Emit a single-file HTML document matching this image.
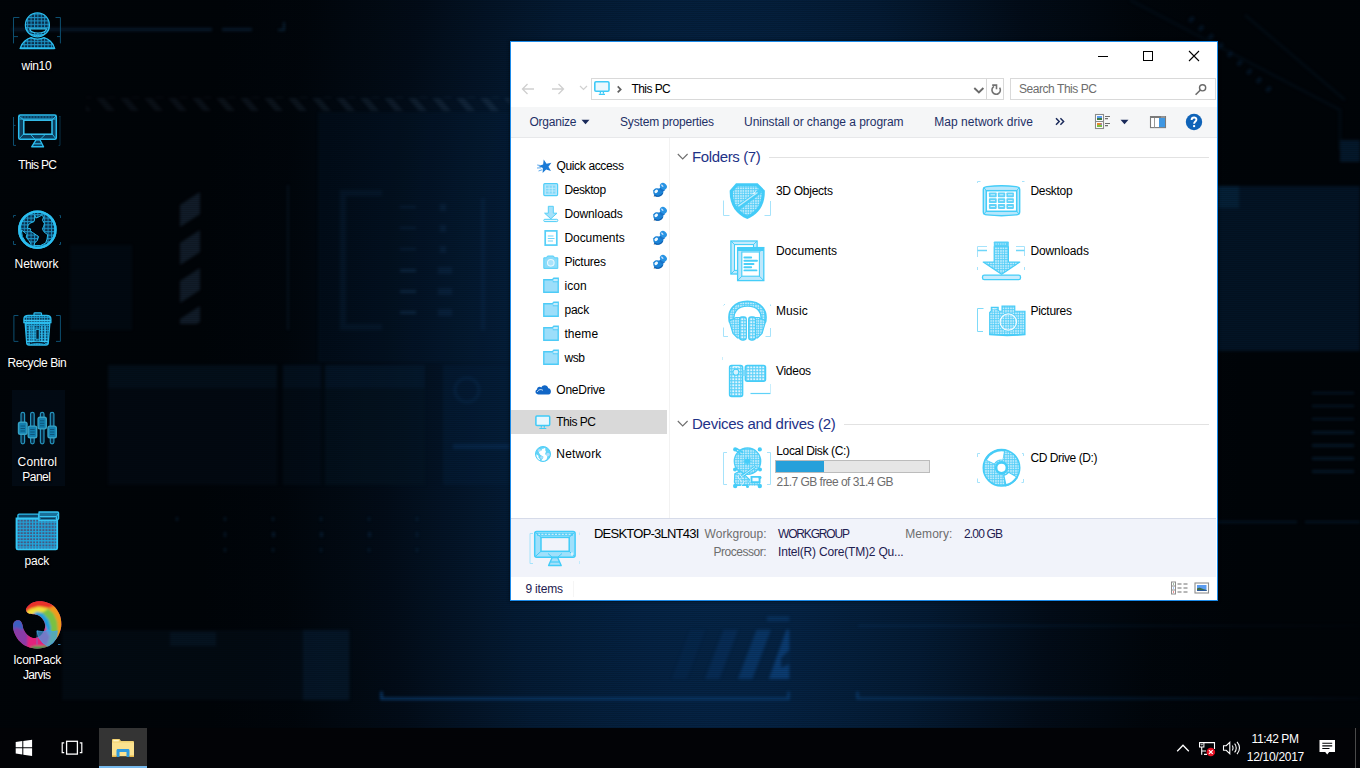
<!DOCTYPE html>
<html>
<head>
<meta charset="utf-8">
<title>This PC</title>
<style>
*{box-sizing:border-box;margin:0;padding:0}
html,body{width:1360px;height:768px;overflow:hidden;background:#000408}
body{font-family:"Liberation Sans",sans-serif;font-size:12px;color:#000;position:relative}
.abs,.t,.dl,svg{position:absolute}
.t{white-space:nowrap;line-height:14px;height:14px}
/* ---------- wallpaper ---------- */
#wall{position:absolute;left:0;top:0;width:1360px;height:768px;overflow:hidden;
 background:
  radial-gradient(ellipse 520px 1400px at 720px 420px,rgb(6,40,76) 0%,rgb(5,35,68) 20%,rgb(4,27,52) 42%,rgb(2,12,24) 65%,rgba(1,7,14,.5) 85%,rgba(1,6,12,0) 100%),
  #000408;}
#wall svg{filter:blur(1.7px)}
#scan{position:absolute;left:0;top:0;width:1360px;height:728px;background:repeating-linear-gradient(to bottom,rgba(0,0,0,0) 0,rgba(0,0,0,0) 1px,rgba(0,0,0,.14) 1px,rgba(0,0,0,.14) 2px)}
/* ---------- desktop icons ---------- */
.dl{color:#fff;text-align:center;width:90px;left:-8px;line-height:15px;font-size:12px;text-shadow:0 1px 2px rgba(0,0,0,.9),0 0 2px rgba(0,0,0,.8)}
/* ---------- window ---------- */
#win{position:absolute;left:510px;top:41px;width:708px;height:560px;background:#fff;border:1px solid #1b8ae8;box-shadow:0 0 3px rgba(0,0,0,.7)}
#win .in{position:absolute;left:-511px;top:-42px;width:1360px;height:768px}
/* ---------- taskbar ---------- */
#tb{position:absolute;left:0;top:728px;width:1360px;height:40px;background:#020306}
</style>
</head>
<body>
<div id="wall">
<svg style="left:0;top:0" width="1360" height="728" viewBox="0 0 1360 728">
<defs>
<pattern id="hz" width="24" height="14" patternUnits="userSpaceOnUse"><path d="M0 0L8 0L20 14L12 14Z" fill="#6f93b8"/></pattern>
<linearGradient id="fadeL" x1="0" x2="1"><stop offset="0" stop-color="#fff" stop-opacity=".25"/><stop offset="1" stop-color="#fff" stop-opacity="1"/></linearGradient>
<mask id="mL"><rect x="0" y="0" width="1360" height="728" fill="url(#fadeL)"/></mask>
<linearGradient id="gR" x1="0" x2="1"><stop offset="0" stop-color="#0b3a6c" stop-opacity="0"/><stop offset="1" stop-color="#0b3a6c" stop-opacity=".9"/></linearGradient>
<linearGradient id="gLine" x1="0" x2="1"><stop offset="0" stop-color="#0c3d6e" stop-opacity=".9"/><stop offset="1" stop-color="#0c3d6e" stop-opacity=".1"/></linearGradient>
</defs>
<!-- dark strip on far left -->

<!-- top faint bar -->
<rect x="12" y="28" width="200" height="3" fill="#0a2238" opacity=".8"/>
<rect x="222" y="28" width="30" height="3" fill="#0a2238" opacity=".8"/><path d="M284 22V30H278" stroke="#0d2a44" stroke-width="2" fill="none" opacity=".8"/>
<!-- lighter band under hatch -->

<rect x="318" y="112" width="192" height="250" fill="#0a2c54" opacity=".13"/>
<!-- hatch stripe -->
<g mask="url(#mL)" opacity=".27"><rect x="86" y="97" width="424" height="14" fill="url(#hz)"/></g>
<!-- left tech panel -->
<g opacity=".3">
<path d="M180 205L200 192V214L180 227ZM180 243L200 230V252L180 265ZM180 281L200 268V290L180 303ZM180 319L200 306V322L196 324H180Z" fill="#3a5878"/>
<rect x="287" y="185" width="2" height="145" fill="#17324e"/>
<path d="M340 190H382V196H346V324H382V330H340Z" fill="#0d2a48"/>
<rect x="400" y="206" width="16" height="2" fill="#1b4068"/><rect x="400" y="227" width="16" height="2" fill="#1b4068"/><rect x="400" y="248" width="16" height="2" fill="#1b4068"/><rect x="400" y="269" width="16" height="3" fill="#24527f"/><rect x="400" y="290" width="16" height="3" fill="#24527f"/><rect x="400" y="311" width="16" height="3" fill="#24527f"/>
<rect x="440" y="204" width="6" height="7" fill="#173a60"/><rect x="440" y="225" width="6" height="7" fill="#173a60"/><rect x="440" y="246" width="6" height="7" fill="#173a60"/><rect x="438" y="267" width="14" height="7" fill="#173a60"/><rect x="438" y="288" width="14" height="7" fill="#173a60"/><rect x="438" y="309" width="14" height="7" fill="#173a60"/>
<rect x="481" y="198" width="4" height="132" fill="#0f3258"/>
<rect x="70" y="245" width="62" height="85" fill="#06182a"/>
</g>
<!-- middle panels -->
<g opacity=".5">
<rect x="108" y="365" width="169" height="120" fill="#04111e" opacity=".9"/>
<rect x="108" y="365" width="169" height="23" fill="#071c30" opacity=".9"/>
<rect x="283" y="365" width="38" height="120" fill="#04121f" opacity=".9"/>
<rect x="283" y="365" width="38" height="23" fill="#071d32" opacity=".9"/>
<rect x="325" y="365" width="100" height="120" fill="#051829" opacity=".9"/>
<rect x="325" y="365" width="100" height="23" fill="#08223b" opacity=".9"/>
<rect x="443" y="365" width="67" height="120" fill="#062240" opacity=".8"/>
<circle cx="467" cy="390" r="12" fill="none" stroke="#0b3560" stroke-width="3" opacity=".8"/>
<rect x="453" y="444" width="57" height="5" fill="#0d3c6c" opacity=".8"/>
</g>
<!-- dots grid -->
<g fill="#0c2b48" opacity=".6">
<rect x="176" y="517" width="2" height="4"/><rect x="224" y="517" width="2" height="4"/><rect x="272" y="517" width="2" height="4"/><rect x="320" y="517" width="2" height="4"/><rect x="368" y="517" width="2" height="4"/><rect x="416" y="517" width="2" height="4"/>
<rect x="224" y="532" width="2" height="5"/><rect x="272" y="532" width="3" height="5"/><rect x="320" y="532" width="3" height="5"/><rect x="368" y="532" width="3" height="5"/><rect x="416" y="532" width="2" height="5"/>
<rect x="224" y="548" width="2" height="4"/><rect x="272" y="548" width="2" height="4"/><rect x="320" y="548" width="2" height="4"/><rect x="368" y="548" width="2" height="4"/><rect x="416" y="548" width="2" height="4"/>
</g>
<!-- bottom-left blocks -->
<rect x="62" y="630" width="288" height="70" fill="#04121f" opacity=".45"/>
<rect x="170" y="632" width="46" height="14" fill="#0a2238" opacity=".4"/>
<rect x="303" y="630" width="46" height="70" fill="#071f38" opacity=".5"/>
<!-- bracket line -->
<path d="M381.500 691.500V698.700H788.500V691.500" fill="none" stroke="#0c3f74" stroke-width="2.600" opacity=".9"/>
<path d="M857.500 691.500V699.500" stroke="#0c3f74" stroke-width="2.600" opacity=".8"/>
<rect x="858" y="697.500" width="502" height="2" fill="url(#gLine)"/>
<rect x="858" y="625" width="502" height="1.500" fill="url(#gLine)" opacity=".5"/>
<!-- diagonal stripes -->
<g>
<path d="M768.800 679L786.300 629.700H789.400V679Z" fill="#0c3f78" opacity=".9"/>
<path d="M737.900 679L756.500 629.700H771L752.400 679Z" fill="#0b3c72" opacity=".75"/>
<path d="M705 679L723.500 629.700H738L719.400 679Z" fill="#0a386a" opacity=".45"/>
<path d="M672 679L690.500 629.700H705L686.500 679Z" fill="#0a3464" opacity=".22"/>
<path d="M781 658L789.400 650V664L781 668Z" fill="#04203f" opacity=".8"/>
<rect x="766.800" y="616.300" width="22.600" height="5" fill="#0b3c70" opacity=".6"/>
</g>
<!-- right rect -->
<rect x="1217" y="186" width="143" height="165" fill="#031527" opacity=".95"/>
<rect x="1217" y="186" width="22" height="22" fill="#06213a" opacity=".9"/>
<rect x="1340" y="140" width="20" height="22" fill="#06213a" opacity=".7"/>
<!-- right side diagonals -->
<g stroke="#05182a" stroke-width="3" opacity=".35" fill="none">
<path d="M1130 0L1340 110V150"/><path d="M1245 15L1345 100"/>
</g>
<g stroke="#06203a" stroke-width="6" opacity=".6" stroke-dasharray="4 9"><path d="M1190 18L1275 95"/></g>
<!-- lower right features -->
<g fill="#0a2a48" opacity=".55">
<rect x="1312" y="392" width="42" height="2"/><rect x="1312" y="405" width="42" height="2"/><rect x="1312" y="418" width="42" height="2"/><rect x="1312" y="431" width="42" height="3"/><rect x="1312" y="444" width="42" height="3"/><rect x="1312" y="457" width="42" height="3"/><rect x="1312" y="470" width="42" height="3"/>
<rect x="1217" y="521" width="80" height="2"/><rect x="1305" y="521" width="55" height="2"/>
</g>
</svg>

</div>
<div id="scan"></div>
<svg style="left:0;top:0" width="90" height="700" viewBox="0 0 90 700">
<defs>
<pattern id="mesh" width="3.4" height="3.4" patternUnits="userSpaceOnUse"><rect width="3.4" height="3.4" fill="#0a2c48"/><path d="M0 .5H3.4M.5 0V3.4" stroke="#1c93c6" stroke-width=".95"/></pattern>
<pattern id="meshF" width="3.100" height="3.100" patternUnits="userSpaceOnUse" x="16.500" y="518.500"><rect width="3.100" height="3.100" fill="#46587f"/><path d="M0 .5H3.100M.5 0V3.100" stroke="#20a6dc" stroke-width="1.150"/></pattern>
<pattern id="meshT" width="2.600" height="2.600" patternUnits="userSpaceOnUse"><rect width="2.600" height="2.600" fill="#0c3a58"/><path d="M0 .5H2.600M.5 0V2.600" stroke="#1fa0d4" stroke-width=".9"/></pattern>
</defs>
<g fill="none" stroke="#0d4f70" stroke-width="1">
<path d="M19.400 17.500H13.500V43.400M14 36.600H18M55.500 17.500H60.400V43.400M57 36.600H60"/>
<path d="M13.500 117V145.400H16M13.500 125.400H15.500" /><path d="M60 116.500V145.400M58.500 145.400H60M59 116.500H60.500" opacity=".6"/>
<path d="M13.500 217.500V215.500H15.800M13.500 241V244.500H16M59.500 215.500H60.500V218M59 244.500H60.500V242" />
<path d="M18.400 315.500H13.900V341.400H18.400M56 315.500H60.400V341.400H56"/>
</g>
<!-- user -->
<g stroke="#2bbdee" stroke-width="1.300" fill="url(#mesh)">
<path d="M20.200 48.400C21.500 42.500 27 38.700 31 37.600 34.500 39.700 40.500 39.700 44 37.600 48 38.700 53.500 42.500 54.600 48.400Z"/>
<circle cx="37.400" cy="24.900" r="12"/>
</g>
<path d="M20.200 48.300H54.600" stroke="#2bbdee" stroke-width="1.700"/>
<path d="M29.600 28.800H46.600C45 34.400 31.200 34.400 29.600 28.800Z" fill="#01050a" stroke="#36c4f2" stroke-width="1.200" stroke-linejoin="round"/>
<path d="M26 28.500C28 38 47 38 49 28.500" fill="none" stroke="#2bbdee" stroke-width="1"/>
<!-- This PC monitor -->
<rect x="18.700" y="115.100" width="37.600" height="24.200" rx="1.600" fill="#0c3e5e" stroke="#2bbdee" stroke-width="1.500"/>
<path d="M19.500 119H55.500" stroke="#2bbdee" stroke-width="1"/>
<path d="M22 115.500V119M25 115.500V119M28 115.500V119M31 115.500V119M34 115.500V119M37 115.500V119M40 115.500V119M43 115.500V119M46 115.500V119M49 115.500V119M52 115.500V119" stroke="#1a86b6" stroke-width=".8"/>
<path d="M19 116L23.600 120M56 116L52.200 120M19 139L23.600 134M56 139L52.200 134M30.800 134.600L35.300 139.600M45.100 134.600L39.900 139.600" stroke="#2bbdee" stroke-width=".9"/>
<rect x="23.800" y="120.200" width="28.200" height="14" fill="#01050a" stroke="#36c4f2" stroke-width="1.500"/>
<path d="M36 139.800H39.900L43.500 146.800H31.700Z" fill="#0c3e5e" stroke="#2bbdee" stroke-width="1.400" stroke-linejoin="round"/>
<path d="M34 143.800H41.500" stroke="#2bbdee" stroke-width="1.100"/>
<!-- globe -->
<circle cx="37.400" cy="229.700" r="18.100" fill="url(#mesh)" stroke="#2bbdee" stroke-width="2.300"/>
<path d="M34.7 215.1L36.0 218.0L39.2 216.7L41.8 215.1L43.5 217.0L42.5 220.3L44.4 223.5L43.8 226.1L42.5 228.7L43.5 231.3L45.7 233.3L47.7 234.6L47.0 239.1L45.7 243.0L40.5 245.6L34.0 245.6L34.7 243.0L37.3 240.4L38.6 236.5L36.6 235.2L32.7 232.6L30.1 230.7L30.8 229.0L27.5 228.1L28.2 224.8L30.8 222.9L34.0 221.6L34.7 219.0Z" fill="#01050a" stroke="#2bbdee" stroke-width="1" stroke-linejoin="round"/>
<path d="M21.3 230.0L24.9 232.6L26.9 234.6L26.2 237.2L28.8 240.4L30.8 243.7L29.5 244.7L25.6 241.7L22.3 236.5Z" fill="#01050a" stroke="#2bbdee" stroke-width="1" stroke-linejoin="round"/>
<circle cx="37.400" cy="229.700" r="18.100" fill="none" stroke="#2bbdee" stroke-width="2.300"/>
<!-- recycle bin -->
<path d="M34 315.700V313.600C34 313 34.500 312.800 35 312.800H40.500C41 312.800 41.500 313 41.500 313.600V315.700" fill="#0c3a58" stroke="#2bbdee" stroke-width="1.200"/>
<path d="M23.900 322.700V319C23.900 316.500 26 315.500 28.500 315.500H46.500C49 315.500 50.900 316.500 50.900 319V322.700Z" fill="url(#meshT)" stroke="#2bbdee" stroke-width="1.300"/>
<path d="M24 320.600H50.800" stroke="#36c4f2" stroke-width="1.500"/>
<path d="M25.200 323.500H49.800L48.300 343C48.200 344.500 47.500 345 46 345H29C27.500 345 26.800 344.500 26.700 343Z" fill="url(#meshT)" stroke="#2bbdee" stroke-width="1.300"/>
<path d="M29.800 326V341.500M33.200 326V341.500M41.800 326V341.500M45.200 326V341.500M27 341.500H48" stroke="#36c4f2" stroke-width="1.100"/>
<rect x="35.900" y="329.400" width="3.300" height="9.800" fill="#052033" stroke="#2bbdee" stroke-width=".8"/>
<path d="M30 343.500C34 342.300 41 342.300 45 343.500" stroke="#052033" stroke-width="1.200" fill="none"/>
<!-- control panel sliders -->
<g stroke="#30c2f2" stroke-width="1.200" fill="#0a3450">
<rect x="21" y="412.300" width="3.600" height="31.600" rx="1.800"/><rect x="30.600" y="412.300" width="3.600" height="31.600" rx="1.800"/><rect x="40.400" y="412.300" width="3.600" height="31.600" rx="1.800"/><rect x="50.300" y="412.300" width="3.600" height="31.600" rx="1.800"/>
</g>
<g stroke="#48d4fb" stroke-width="1.400" fill="#1aa6de">
<rect x="18.500" y="422.200" width="8.500" height="12" rx="1.800"/><rect x="28.200" y="426.100" width="8.500" height="11.600" rx="1.800"/><rect x="38.100" y="417.300" width="8.200" height="11.600" rx="1.800"/><rect x="48" y="426.100" width="8.300" height="11.600" rx="1.800"/>
</g>
<path d="M20.500 426H25M20.500 428.500H25M20.500 431H25M30.200 429.500H34.700M30.200 432H34.700M30.200 434.500H34.700M40 420.800H44.300M40 423.300H44.300M40 425.800H44.300M50 429.500H54.300M50 432H54.300M50 434.500H54.300" stroke="#0b5e88" stroke-width=".9" opacity=".9"/>
<!-- folder pack -->
<path d="M17.900 518V515.300C17.900 514.500 18.400 514.100 19.200 514.100H38.600V518" fill="#0d4a6e" stroke="#2bbdee" stroke-width="1.300"/>
<path d="M16.500 518.500H57.200V548C57.200 549 56.700 549.300 55.800 549.300H17.900C17 549.300 16.500 549 16.500 548Z" fill="url(#meshF)" stroke="#35c8f5" stroke-width="1.800"/>
<path d="M39 512H57.500C58.200 512 58.600 512.400 58.600 513V518.500L57 520.500H39Z" fill="#1a6f98" stroke="#36c4f2" stroke-width="1.300" stroke-linejoin="round"/>
<path d="M39.500 516.500H56.500L58.300 513.500M56.500 516.500V520" stroke="#36c4f2" stroke-width="1" fill="none"/>
<path d="M41 518.500H55" stroke="#0b3a58" stroke-width="1"/>
<!-- IconPack swirl -->
<defs><clipPath id="swc"><path d="M26.51 607.91C27.59 606.43 30.21 603.69 32.96 602.61C35.71 601.54 39.65 600.99 42.99 601.46C46.34 601.94 50.28 603.33 53.02 605.48C55.77 607.63 58.09 611.21 59.47 614.36C60.86 617.52 61.34 621.29 61.34 624.39C61.34 627.50 60.50 630.36 59.47 632.99C58.45 635.62 57.20 637.89 55.17 640.16C53.14 642.43 50.28 645.17 47.29 646.61C44.31 648.04 40.60 648.76 37.26 648.76C33.92 648.76 30.33 648.04 27.23 646.61C24.12 645.17 20.85 642.67 18.63 640.16C16.41 637.65 14.81 634.19 13.90 631.56C12.99 628.93 12.87 626.19 13.18 624.39C13.49 622.60 14.62 621.41 15.76 620.81C16.91 620.21 18.96 620.21 20.06 620.81C21.16 621.41 21.76 622.96 22.36 624.39C22.95 625.83 22.83 627.69 23.65 629.41C24.46 631.13 25.68 633.28 27.23 634.71C28.78 636.15 30.93 637.70 32.96 638.01C34.99 638.32 37.62 637.65 39.41 636.57C41.20 635.50 42.75 633.35 43.71 631.56C44.66 629.77 45.14 627.62 45.14 625.83C45.14 624.04 44.54 622.36 43.71 620.81C42.87 619.26 41.68 617.59 40.13 616.51C38.57 615.44 36.19 614.84 34.39 614.36C32.60 613.88 30.69 614.12 29.38 613.65C28.06 613.17 26.99 612.45 26.51 611.50C26.03 610.54 25.44 609.39 26.51 607.91Z"/></clipPath><filter id="swb" x="-20%" y="-20%" width="140%" height="140%"><feGaussianBlur stdDeviation="1.1"/></filter></defs>
<g clip-path="url(#swc)"><rect x="8" y="596" width="60" height="58" fill="#d8247a"/><g filter="url(#swb)">
<path d="M45.9 624.4L46.6 628.7L49.4 634.4L48.7 647.3L37.3 650.2L26.5 647.3L27.2 634.7L33.0 638.0L39.4 636.6L43.7 631.6Z" fill="#e2207c" stroke="#e2207c" stroke-width="1.2" stroke-linejoin="round"/>
<path d="M14.3 626.5L23.6 629.4L27.2 634.7L26.5 647.3L17.2 640.9L12.9 633.0Z" fill="#8a3aa6" stroke="#8a3aa6" stroke-width="1.2" stroke-linejoin="round"/>
<path d="M12.9 632.3L12.2 624.4L15.0 619.4L20.8 619.4L22.9 623.7L23.6 629.4L14.3 626.5Z" fill="#3d5fc2" stroke="#3d5fc2" stroke-width="1.2" stroke-linejoin="round"/>
<path d="M30.8 647.6L37.3 650.2L48.0 647.6L49.4 645.6L43.0 646.5L35.8 646.7Z" fill="#2a9a48" stroke="#2a9a48" stroke-width="1.2" stroke-linejoin="round"/>
<path d="M43.0 600.0L54.5 604.3L61.6 614.4L63.1 624.4L60.9 634.4L55.9 640.9L57.3 630.1L56.6 621.5L53.0 613.6L47.3 608.6L38.7 606.9Z" fill="#f39a1e" stroke="#f39a1e" stroke-width="1.2" stroke-linejoin="round"/>
<path d="M24.4 607.9L33.0 600.7L43.0 600.0L54.5 605.0L47.3 607.9L38.7 607.2L30.8 609.3L25.8 612.9Z" fill="#e8302a" stroke="#e8302a" stroke-width="1.2" stroke-linejoin="round"/>
<path d="M47.3 608.6L53.0 613.6L56.6 621.5L57.3 630.1L55.9 640.9L47.3 647.3L50.9 637.3L50.2 627.3L48.0 620.1L43.0 614.4L37.3 612.2L43.0 611.5Z" fill="#7ac143" stroke="#7ac143" stroke-width="1.2" stroke-linejoin="round"/>
<path d="M25.8 612.9L30.8 609.3L38.7 607.2L47.3 608.6L43.0 611.5L37.3 612.2L31.5 614.4L27.2 615.1Z" fill="#efe03a" stroke="#efe03a" stroke-width="1.2" stroke-linejoin="round"/>
<path d="M37.3 612.2L43.0 614.4L48.0 620.1L50.2 627.3L49.4 634.4L46.6 628.7L45.1 623.7L42.3 618.7L38.7 615.8L33.7 614.6Z" fill="#1f9fe0" stroke="#1f9fe0" stroke-width="1.2" stroke-linejoin="round"/>
</g></g>
<path d="M37.0 630.8L43.0 631.8L48.0 630.1L53.0 631.8L57.3 630.8L56.6 637.3L53.0 643.0L48.0 646.2L43.0 643.0L38.4 637.3Z" fill="rgba(70,160,230,.7)" stroke="#3fa8ea" stroke-width=".7"/>
<path d="M37.0 630.8L37.0 644.5" stroke="#3fa8ea" stroke-width=".7" opacity=".7"/>
<path d="M58.0 644.5H60.5" stroke="#3fa8ea" stroke-width=".7"/>
</svg>
<div class="abs" style="left:12px;top:390px;width:53px;height:96px;background:rgba(8,30,52,.28)"></div>
<span class="t" style="left:21.6px;top:59px;font-size:12px;line-height:15px;height:15px;color:#fff;letter-spacing:-0.340px;text-shadow:0 1px 2px #000,0 0 2px #000">win10</span>
<span class="t" style="left:18.3px;top:158px;font-size:12px;line-height:15px;height:15px;color:#fff;letter-spacing:-0.665px;text-shadow:0 1px 2px #000,0 0 2px #000">This PC</span>
<span class="t" style="left:14.5px;top:257px;font-size:12px;line-height:15px;height:15px;color:#fff;text-shadow:0 1px 2px #000,0 0 2px #000">Network</span>
<span class="t" style="left:7.5px;top:356px;font-size:12px;line-height:15px;height:15px;color:#fff;letter-spacing:-0.406px;text-shadow:0 1px 2px #000,0 0 2px #000">Recycle Bin</span>
<span class="t" style="left:17.6px;top:455px;font-size:12px;line-height:15px;height:15px;color:#fff;letter-spacing:0.119px;text-shadow:0 1px 2px #000,0 0 2px #000">Control</span>
<span class="t" style="left:22.3px;top:470px;font-size:12px;line-height:15px;height:15px;color:#fff;letter-spacing:-0.526px;text-shadow:0 1px 2px #000,0 0 2px #000">Panel</span>
<span class="t" style="left:24.6px;top:554px;font-size:12px;line-height:15px;height:15px;color:#fff;letter-spacing:-0.253px;text-shadow:0 1px 2px #000,0 0 2px #000">pack</span>
<span class="t" style="left:13.2px;top:653px;font-size:12px;line-height:15px;height:15px;color:#fff;letter-spacing:-0.194px;text-shadow:0 1px 2px #000,0 0 2px #000">IconPack</span>
<span class="t" style="left:22.9px;top:668px;font-size:12px;line-height:15px;height:15px;color:#fff;letter-spacing:-0.649px;text-shadow:0 1px 2px #000,0 0 2px #000">Jarvis</span>

<div id="win"><div class="in">
<!-- title bar buttons -->
<div class="abs" style="left:1098px;top:56px;width:10px;height:1px;background:#000"></div>
<div class="abs" style="left:1143px;top:51px;width:10px;height:10px;border:1px solid #000"></div>
<svg style="left:1188px;top:50px" width="12" height="12" viewBox="0 0 12 12"><path d="M1 1 L11 11 M11 1 L1 11" stroke="#000" stroke-width="1.1" fill="none"/></svg>
<!-- nav arrows -->
<svg style="left:521px;top:82px" width="14" height="14" viewBox="0 0 14 14"><path d="M13 7 H2 M6.5 2 L1.5 7 L6.5 12" stroke="#cfcfcf" stroke-width="1.3" fill="none"/></svg>
<svg style="left:551px;top:82px" width="14" height="14" viewBox="0 0 14 14"><path d="M1 7 H12 M7.5 2 L12.5 7 L7.5 12" stroke="#cfcfcf" stroke-width="1.3" fill="none"/></svg>
<svg style="left:579px;top:85px" width="9" height="6" viewBox="0 0 9 6"><path d="M1 1 L4.5 4.5 L8 1" stroke="#d0d0d0" stroke-width="1.2" fill="none"/></svg>
<!-- address box -->
<div class="abs" style="left:591px;top:78px;width:413px;height:22px;border:1px solid #d9d9d9;background:#fff"></div>
<div class="abs" style="left:986px;top:78px;width:1px;height:22px;background:#d9d9d9"></div>
<svg style="left:616px;top:85px" width="7" height="9" viewBox="0 0 7 9"><path d="M1.700 1.400L4.700 4.400L1.700 7.400" stroke="#5f5f5f" stroke-width="1.700" fill="none"/></svg>
<span class="t" style="left:631.4px;top:82px;font-size:12px;line-height:15px;height:15px;color:#000;letter-spacing:-0.548px;">This PC</span>
<svg style="left:973px;top:86px" width="12" height="8" viewBox="0 0 12 8"><path d="M1.300 2L5.900 6.500L10.400 2" stroke="#6a6a6a" stroke-width="1.850" fill="none"/></svg>
<svg style="left:989px;top:83px" width="14" height="14" viewBox="0 0 14 14"><path d="M10.600 4.600A4.200 4.200 0 1 1 5 3.400" stroke="#737373" stroke-width="1.600" fill="none"/><path d="M3.200 2.150H7.500V6.300" stroke="#737373" stroke-width="1.600" fill="none"/></svg>
<svg style="left:593px;top:80px" width="18" height="16" viewBox="0 0 18 16"><rect x="1.800" y="1.700" width="14.200" height="9.600" rx="1.200" fill="#eaf8fe" stroke="#3fcaf7" stroke-width="1.600"/><path d="M7.400 11.500V13.600M10.400 11.500V13.600M5.800 14.400H12" stroke="#3fcaf7" stroke-width="1.300"/></svg>
<!-- search box -->
<div class="abs" style="left:1010px;top:78px;width:206px;height:22px;border:1px solid #d9d9d9;background:#fff"></div>
<span class="t" style="left:1019px;top:82px;font-size:12px;line-height:15px;height:15px;color:#6d6d6d;letter-spacing:-0.447px;">Search This PC</span>
<svg style="left:1194px;top:83px" width="14" height="14" viewBox="0 0 14 14"><circle cx="8.6" cy="4.8" r="3.1" stroke="#6a6a6a" stroke-width="1.4" fill="none"/><path d="M6.4 7 L1.6 11.8" stroke="#6a6a6a" stroke-width="1.6" fill="none"/></svg>
<!-- command bar -->
<div class="abs" style="left:511px;top:107px;width:706px;height:30px;background:#f5f6f7"></div>
<div class="abs" style="left:511px;top:137px;width:706px;height:1px;background:#e7e8ea"></div>
<span class="t" style="left:529.5px;top:115px;font-size:12px;line-height:15px;height:15px;color:#1e3066;letter-spacing:-0.243px;">Organize</span>
<svg style="left:581px;top:119px" width="9" height="6" viewBox="0 0 9 6"><path d="M0.5 0.8 H8.5 L4.5 5.2 Z" fill="#1a2a5a"/></svg>
<span class="t" style="left:620px;top:115px;font-size:12px;line-height:15px;height:15px;color:#1e3066;letter-spacing:-0.169px;">System properties</span>
<span class="t" style="left:744.1px;top:115px;font-size:12px;line-height:15px;height:15px;color:#1e3066;letter-spacing:-0.045px;">Uninstall or change a program</span>
<span class="t" style="left:934.2px;top:115px;font-size:12px;line-height:15px;height:15px;color:#1e3066;letter-spacing:0.047px;">Map network drive</span>
<svg style="left:1055px;top:117px" width="10" height="9" viewBox="0 0 10 9"><path d="M1 1.2 L4.2 4.5 L1 7.8 M5.4 1.2 L8.6 4.5 L5.4 7.8" stroke="#1a2a5a" stroke-width="1.5" fill="none"/></svg>
<svg style="left:1094px;top:113px" width="18" height="17" viewBox="0 0 18 17"><rect x="1.500" y="1.500" width="8" height="14" fill="#fff" stroke="#8a8a8a" stroke-width="1.100"/><path d="M1.500 8.500H9.500" stroke="#8a8a8a" stroke-width="1.100"/><rect x="3" y="3" width="5" height="2" fill="#5b9cf0"/><rect x="3" y="5" width="5" height="2" fill="#3c7a4a"/><rect x="3" y="10" width="5" height="2" fill="#e8862a"/><rect x="3" y="12" width="5" height="2" fill="#7bc043"/><rect x="6.500" y="10.500" width="1.500" height="1.500" fill="#8d86d8"/><path d="M11 3.500H16M11 5.600H14M11 10.500H16M11 12.600H14" stroke="#6e6e6e" stroke-width="1.100"/></svg>
<svg style="left:1120px;top:119px" width="9" height="6" viewBox="0 0 9 6"><path d="M0.5 0.8 H8.5 L4.5 5.2 Z" fill="#1a2a5a"/></svg>
<svg style="left:1149px;top:115px" width="18" height="14" viewBox="0 0 18 14"><rect x="1.500" y="1.600" width="15" height="11" fill="#fff" stroke="#7a7a7a" stroke-width="1.100"/><rect x="1" y="1" width="16" height="2" fill="#7a7a7a"/><rect x="10" y="3" width="6" height="9.100" fill="#3f97e2"/><path d="M5.500 3V12.500" stroke="#9a9a9a" stroke-width="1"/><rect x="12.500" y="1.500" width="1" height="1" fill="#ddd"/><rect x="14.500" y="1.500" width="1" height="1" fill="#ddd"/></svg>
<svg style="left:1185px;top:113px" width="18" height="18" viewBox="0 0 18 18"><circle cx="9" cy="9" r="8.2" fill="#0f63b8"/><path d="M6.6 7 C6.6 3.6 11.6 3.8 11.4 6.8 C11.3 8.6 9.1 8.6 9.1 10.8" stroke="#fff" stroke-width="1.9" fill="none"/><rect x="8.1" y="12.1" width="2" height="2" fill="#fff"/></svg>
<!-- nav pane -->
<div class="abs" style="left:669px;top:138px;width:1px;height:380px;background:#f2f2f2"></div>
<div class="abs" style="left:511px;top:410px;width:156px;height:24px;background:#d9d9d9"></div>
<span class="t" style="left:556.5px;top:159px;font-size:12px;line-height:15px;height:15px;color:#000;letter-spacing:-0.351px;">Quick access</span>
<span class="t" style="left:564.4px;top:183px;font-size:12px;line-height:15px;height:15px;color:#000;letter-spacing:-0.389px;">Desktop</span>
<span class="t" style="left:564.4px;top:207px;font-size:12px;line-height:15px;height:15px;color:#000;letter-spacing:-0.122px;">Downloads</span>
<span class="t" style="left:564.4px;top:231px;font-size:12px;line-height:15px;height:15px;color:#000;letter-spacing:-0.050px;">Documents</span>
<span class="t" style="left:564.4px;top:255px;font-size:12px;line-height:15px;height:15px;color:#000;letter-spacing:-0.251px;">Pictures</span>
<span class="t" style="left:564.4px;top:279px;font-size:12px;line-height:15px;height:15px;color:#000;letter-spacing:0.095px;">icon</span>
<span class="t" style="left:564.4px;top:303px;font-size:12px;line-height:15px;height:15px;color:#000;letter-spacing:-0.186px;">pack</span>
<span class="t" style="left:564.4px;top:327px;font-size:12px;line-height:15px;height:15px;color:#000;letter-spacing:0.085px;">theme</span>
<span class="t" style="left:564.4px;top:351px;font-size:12px;line-height:15px;height:15px;color:#000;letter-spacing:-0.372px;">wsb</span>
<span class="t" style="left:556.3px;top:383px;font-size:12px;line-height:15px;height:15px;color:#000;letter-spacing:-0.241px;">OneDrive</span>
<span class="t" style="left:556.3px;top:415px;font-size:12px;line-height:15px;height:15px;color:#000;letter-spacing:-0.515px;">This PC</span>
<span class="t" style="left:556.3px;top:447px;font-size:12px;line-height:15px;height:15px;color:#000;letter-spacing:0.164px;">Network</span>
<!--NI_BEGIN--><svg style="left:0;top:0" width="700" height="520" viewBox="0 0 700 520">
<!-- quick access star -->
<path d="M545.300 159.400L547.100 164.100L552 164.300L548.200 167.400L549.600 172.200L545.300 169.500L541 172.200L542.400 167.400L538.600 164.300L543.500 164.100Z" fill="#1a7ad6" transform="rotate(-14 545.300 166)"/>
<path d="M537.200 165L540.300 165.500M537 168L541 167.800M538.500 171L542 169.800" stroke="#5aa8ec" stroke-width="1"/>
<!-- desktop -->
<rect x="543.800" y="183.600" width="13.800" height="12" rx="1" fill="#b5e6fb" stroke="#4fcef8" stroke-width="1.200"/>
<rect x="546" y="185.600" width="9.400" height="8" fill="#7fd8f9"/>
<path d="M546 188.300H555.400M546 191H555.400M549.100 185.600V193.600M552.300 185.600V193.600" stroke="#c9edfc" stroke-width=".8"/>
<!-- downloads -->
<path d="M548.300 206.300H553.300V213.200H557L550.800 218.800 544.600 213.200H548.300Z" fill="#a5e1fa" stroke="#55cff8" stroke-width="1"/>
<rect x="543.800" y="219.300" width="14" height="2.300" rx="1" fill="#e6f7fe" stroke="#4fcef8" stroke-width="1"/>
<!-- documents -->
<rect x="545.200" y="230.900" width="11.600" height="14.200" fill="#fff" stroke="#55cff8" stroke-width="1.700"/>
<path d="M547.800 236H553.500M547.800 238.500H554.500M547.800 241H553" stroke="#6fd5f9" stroke-width="1.100"/>
<!-- pictures -->
<path d="M543.800 257.800H546.500L547.500 256H553.500L554.500 257.800H557.800V268.400H543.800Z" fill="#8adbf9" stroke="#55cff8" stroke-width="1"/>
<circle cx="550.800" cy="262.800" r="3.300" fill="#a9e3fb" stroke="#e8f7fe" stroke-width="1.100"/>
<g transform="translate(0,0)"><path d="M543.800 279.800H552.500L553.800 278.300H558.200V292.200H543.800Z" fill="#9cdefa" stroke="#4dcbf7" stroke-width="1.400"/><path d="M552.800 281.700H558" stroke="#4dcbf7" stroke-width="1.100"/><rect x="553.600" y="279" width="4" height="2.200" fill="#c4ecfc"/></g>
<g transform="translate(0,24)"><path d="M543.800 279.800H552.500L553.800 278.300H558.200V292.200H543.800Z" fill="#9cdefa" stroke="#4dcbf7" stroke-width="1.400"/><path d="M552.800 281.700H558" stroke="#4dcbf7" stroke-width="1.100"/><rect x="553.600" y="279" width="4" height="2.200" fill="#c4ecfc"/></g>
<g transform="translate(0,48)"><path d="M543.800 279.800H552.500L553.800 278.300H558.200V292.200H543.800Z" fill="#9cdefa" stroke="#4dcbf7" stroke-width="1.400"/><path d="M552.800 281.700H558" stroke="#4dcbf7" stroke-width="1.100"/><rect x="553.600" y="279" width="4" height="2.200" fill="#c4ecfc"/></g>
<g transform="translate(0,72)"><path d="M543.800 279.800H552.500L553.800 278.300H558.200V292.200H543.800Z" fill="#9cdefa" stroke="#4dcbf7" stroke-width="1.400"/><path d="M552.800 281.700H558" stroke="#4dcbf7" stroke-width="1.100"/><rect x="553.600" y="279" width="4" height="2.200" fill="#c4ecfc"/></g>

<!-- onedrive -->
<path d="M538.500 394.500C535.500 394.500 534.300 391 537 389.600 536.800 386.800 540 385.800 541.300 387.400 542.800 384.300 547.600 384.600 548.300 388.300 551.500 388.200 552 394.500 548.500 394.500Z" fill="#1166c6"/>
<path d="M537.300 391.800C538.500 389.300 541.500 389 543 390.500" stroke="#fff" stroke-width=".8" fill="none"/>
<!-- this pc -->
<rect x="535.900" y="415.900" width="13.800" height="9.600" rx="1" fill="#e8f7fe" stroke="#3fcaf7" stroke-width="1.500"/>
<path d="M541.300 425.800V427.800M544.300 425.800V427.800M539.300 428.500H546.300" stroke="#3fcaf7" stroke-width="1.200"/>
<!-- network -->
<circle cx="543" cy="454" r="7.500" fill="#62d4f8" stroke="#4fcff8" stroke-width="1"/>
<circle cx="539.500" cy="450.500" r="1.600" fill="#b4ddfa"/><circle cx="548" cy="454.500" r="1.800" fill="#b4ddfa"/><circle cx="541.500" cy="457.500" r="1.300" fill="#b4ddfa"/>
<g transform="translate(543 454) scale(.419) translate(-37.400 -229.700)"><path d="M34.7 215.1L36.0 218.0L39.2 216.7L41.8 215.1L43.5 217.0L42.5 220.3L44.4 223.5L43.8 226.1L42.5 228.7L43.5 231.3L45.7 233.3L47.7 234.6L47.0 239.1L45.7 243.0L40.5 245.6L34.0 245.6L34.7 243.0L37.3 240.4L38.6 236.5L36.6 235.2L32.7 232.6L30.1 230.7L30.8 229.0L27.5 228.1L28.2 224.8L30.8 222.9L34.0 221.6L34.7 219.0Z" fill="#fff"/><path d="M21.3 230.0L24.9 232.6L26.9 234.6L26.2 237.2L28.8 240.4L30.8 243.7L29.5 244.7L25.6 241.7L22.3 236.5Z" fill="#fff"/></g>
<g transform="translate(0,0)"><path d="M655.800 194.300L653.900 196.600" stroke="#9a9a9a" stroke-width="1.100"/><path d="M653.400 190.200C654.500 187.700 658.500 187.600 660.600 189.300L663.500 192.200C662.500 195.500 659 197.400 656.200 196.700 653.800 195.500 652.700 192.500 653.400 190.200Z" fill="#1b84d8"/><path d="M659 189L661.500 186L665.200 190L662.500 192.200Z" fill="#1873c8"/><ellipse cx="663.400" cy="186.300" rx="3.700" ry="3.100" transform="rotate(42 663.400 186.300)" fill="#2894e4"/><ellipse cx="662.300" cy="185.700" rx=".8" ry="1.500" transform="rotate(-42 662.300 185.700)" fill="#c8dcfa"/><ellipse cx="656.200" cy="191.300" rx="2" ry="1.500" transform="rotate(-40 656.200 191.300)" fill="#f2faff"/><path d="M654.300 195C656.500 197 660.500 196.800 662.800 193.200" stroke="#0f5cac" stroke-width="1.100" fill="none"/></g>
<g transform="translate(0,24)"><path d="M655.800 194.300L653.900 196.600" stroke="#9a9a9a" stroke-width="1.100"/><path d="M653.400 190.200C654.500 187.700 658.500 187.600 660.600 189.300L663.500 192.200C662.500 195.500 659 197.400 656.200 196.700 653.800 195.500 652.700 192.500 653.400 190.200Z" fill="#1b84d8"/><path d="M659 189L661.500 186L665.200 190L662.500 192.200Z" fill="#1873c8"/><ellipse cx="663.400" cy="186.300" rx="3.700" ry="3.100" transform="rotate(42 663.400 186.300)" fill="#2894e4"/><ellipse cx="662.300" cy="185.700" rx=".8" ry="1.500" transform="rotate(-42 662.300 185.700)" fill="#c8dcfa"/><ellipse cx="656.200" cy="191.300" rx="2" ry="1.500" transform="rotate(-40 656.200 191.300)" fill="#f2faff"/><path d="M654.300 195C656.500 197 660.500 196.800 662.800 193.200" stroke="#0f5cac" stroke-width="1.100" fill="none"/></g>
<g transform="translate(0,48)"><path d="M655.800 194.300L653.900 196.600" stroke="#9a9a9a" stroke-width="1.100"/><path d="M653.400 190.200C654.500 187.700 658.500 187.600 660.600 189.300L663.500 192.200C662.500 195.500 659 197.400 656.200 196.700 653.800 195.500 652.700 192.500 653.400 190.200Z" fill="#1b84d8"/><path d="M659 189L661.500 186L665.200 190L662.500 192.200Z" fill="#1873c8"/><ellipse cx="663.400" cy="186.300" rx="3.700" ry="3.100" transform="rotate(42 663.400 186.300)" fill="#2894e4"/><ellipse cx="662.300" cy="185.700" rx=".8" ry="1.500" transform="rotate(-42 662.300 185.700)" fill="#c8dcfa"/><ellipse cx="656.200" cy="191.300" rx="2" ry="1.500" transform="rotate(-40 656.200 191.300)" fill="#f2faff"/><path d="M654.300 195C656.500 197 660.500 196.800 662.800 193.200" stroke="#0f5cac" stroke-width="1.100" fill="none"/></g>
<g transform="translate(0,72)"><path d="M655.800 194.300L653.900 196.600" stroke="#9a9a9a" stroke-width="1.100"/><path d="M653.400 190.200C654.500 187.700 658.500 187.600 660.600 189.300L663.500 192.200C662.500 195.500 659 197.400 656.200 196.700 653.800 195.500 652.700 192.500 653.400 190.200Z" fill="#1b84d8"/><path d="M659 189L661.500 186L665.200 190L662.500 192.200Z" fill="#1873c8"/><ellipse cx="663.400" cy="186.300" rx="3.700" ry="3.100" transform="rotate(42 663.400 186.300)" fill="#2894e4"/><ellipse cx="662.300" cy="185.700" rx=".8" ry="1.500" transform="rotate(-42 662.300 185.700)" fill="#c8dcfa"/><ellipse cx="656.200" cy="191.300" rx="2" ry="1.500" transform="rotate(-40 656.200 191.300)" fill="#f2faff"/><path d="M654.300 195C656.500 197 660.500 196.800 662.800 193.200" stroke="#0f5cac" stroke-width="1.100" fill="none"/></g>
</svg><!--NI_END-->
<!-- content: group headers -->
<svg style="left:677px;top:153px" width="12" height="8" viewBox="0 0 12 8"><path d="M0.8 1 L5.7 6 L10.6 1" stroke="#6e6e6e" stroke-width="1.1" fill="none"/></svg>
<span class="t" style="left:692px;top:147px;font-size:15px;line-height:19px;height:19px;color:#1e3287;letter-spacing:-0.373px;">Folders (7)</span>
<div class="abs" style="left:769px;top:157px;width:440px;height:1px;background:#e2e2e2"></div>
<svg style="left:677px;top:420px" width="12" height="8" viewBox="0 0 12 8"><path d="M0.8 1 L5.7 6 L10.6 1" stroke="#6e6e6e" stroke-width="1.1" fill="none"/></svg>
<span class="t" style="left:692px;top:414px;font-size:15px;line-height:19px;height:19px;color:#1e3287;letter-spacing:-0.259px;">Devices and drives (2)</span>
<div class="abs" style="left:844px;top:424px;width:365px;height:1px;background:#e2e2e2"></div>
<!-- content labels -->
<span class="t" style="left:775.9px;top:184px;font-size:12px;line-height:15px;height:15px;color:#000;letter-spacing:-0.262px;">3D Objects</span>
<span class="t" style="left:775.9px;top:244px;font-size:12px;line-height:15px;height:15px;color:#000;letter-spacing:0.062px;">Documents</span>
<span class="t" style="left:775.9px;top:304px;font-size:12px;line-height:15px;height:15px;color:#000;letter-spacing:0.139px;">Music</span>
<span class="t" style="left:775.9px;top:364px;font-size:12px;line-height:15px;height:15px;color:#000;letter-spacing:-0.257px;">Videos</span>
<span class="t" style="left:1030.4px;top:184px;font-size:12px;line-height:15px;height:15px;color:#000;letter-spacing:-0.289px;">Desktop</span>
<span class="t" style="left:1030.4px;top:244px;font-size:12px;line-height:15px;height:15px;color:#000;letter-spacing:-0.109px;">Downloads</span>
<span class="t" style="left:1030.4px;top:304px;font-size:12px;line-height:15px;height:15px;color:#000;letter-spacing:-0.251px;">Pictures</span>
<span class="t" style="left:776.3px;top:444px;font-size:12px;line-height:15px;height:15px;color:#000;letter-spacing:-0.356px;">Local Disk (C:)</span>
<div class="abs" style="left:775px;top:460px;width:155px;height:13px;background:#e6e6e6;border:1px solid #bcbcbc"></div>
<div class="abs" style="left:776px;top:461px;width:48px;height:11px;background:#26a0da"></div>
<span class="t" style="left:776.5px;top:475px;font-size:12px;line-height:15px;height:15px;color:#6d6d6d;letter-spacing:-0.534px;">21.7 GB free of 31.4 GB</span>
<span class="t" style="left:1030.4px;top:451px;font-size:12px;line-height:15px;height:15px;color:#000;letter-spacing:-0.417px;">CD Drive (D:)</span>
<!--CI_BEGIN--><svg style="left:0;top:0" width="1360" height="768" viewBox="0 0 1360 768">
<defs>
<pattern id="lm" width="2.5" height="2.5" patternUnits="userSpaceOnUse"><rect width="2.5" height="2.5" fill="#52cdf8"/><rect x=".2" y=".2" width="1.55" height="1.55" fill="#dcf3fd"/></pattern>
<pattern id="lm2" width="3" height="3" patternUnits="userSpaceOnUse"><rect width="3" height="3" fill="#5cd0f8"/><rect x=".3" y=".3" width="1.9" height="1.9" fill="#e2f5fe"/></pattern>
</defs>
<g fill="none" stroke="#a6e3fb" stroke-width="1">
<!-- brackets -->
<path d="M729.500 215.500H723.500V200.500M764.500 215.500H770.500V201"/>
<path d="M728 336.500H723.500V327.500M765.500 336.500H770.500V328M723.500 305.500L725 304M770.500 304.500V306" />
<path d="M750.500 393.500H770.500" stroke="#5fd2f8" stroke-width="1.200"/><path d="M770.500 384V393" stroke="#c9eefc"/>
<path d="M977.500 183V181.500H980.500M1022 181.500H1024.500" />
<path d="M987 246.500H977.500V257M977.500 267V270M1016 246.500H1024.500V256M1024.500 267V270" />
<path d="M977.500 250.500H987M1016 250.500H1024.500" stroke="#6ed6f9" stroke-width="1.400"/>
<path d="M983.500 308.500H977.500V331.500H983" stroke="#7fdaf9"/>
<path d="M727 452.500H723.500V484.500H727M767 452.500H770.500V484.500H767" />
<path d="M977.500 457V453.500H980M1022 453.500H1023.500V456M977.500 478.500V482.500H980M1021.500 482.500H1023.500V479" />
<path d="M722.500 357V360" stroke="#c9eefc"/>
</g>
<!-- 3D Objects : shield -->
<path d="M736 183.300H757.600L764.800 190.400C765.300 205 758.500 214 747.300 219 736 214 729.200 205 729.700 190.400Z" fill="#43cbf7"/>
<path d="M737.300 186.600H756.300L761.600 191.700C762 203.500 756.500 211 747.300 215.400 738 211 732.500 203.500 732.900 191.700Z" fill="url(#lm)"/>
<path d="M735.500 206.500L760 188.500L762 192.500L738.500 211Z" fill="#49cdf7"/>
<path d="M738.300 206.300L757.500 192.500" stroke="#c4ecfc" stroke-width="1.300"/>
<path d="M751 194.500L756 191L755 193.800Z" fill="#e8f7fe"/>
<!-- Documents -->
<rect x="730.900" y="241" width="26.200" height="33" fill="#c6eafc" stroke="#45cdf8" stroke-width="1.300"/>
<rect x="734.500" y="244.600" width="19" height="25.800" fill="#fff" stroke="#45cdf8" stroke-width="1.100"/>
<path d="M731 241L734.500 244.600M757 241L753.500 244.600M731 274L734.500 270.400" stroke="#45cdf8" stroke-width="1"/>
<rect x="737.600" y="247.600" width="26.200" height="33" fill="#bfe8fc" stroke="#45cdf8" stroke-width="1.300"/>
<rect x="737.600" y="247.600" width="26.200" height="3.400" fill="#45cdf8"/>
<rect x="741.800" y="252" width="17.600" height="24.200" fill="#fff" stroke="#45cdf8" stroke-width="1.100"/>
<path d="M737.800 280.400L741.800 276.200M763.600 280.400L759.400 276.200M763.600 247.800L759.400 252" stroke="#45cdf8" stroke-width="1"/>
<g stroke="#4acff8" stroke-width="1.900" stroke-linecap="round"><path d="M744.400 257.500H751.200M744.400 260.800H757M744.400 264H753.500M744.400 267.200H751.200M744.400 270.400H756.500"/></g>
<!-- Music : headphones -->
<path d="M732 322C729.300 311.500 736 303.600 747.500 303.600 759 303.600 765.700 311.500 763 322" fill="none" stroke="#47ccf7" stroke-width="6.400"/>
<path d="M732 321C729.500 311.800 736.300 303.800 747.500 303.800 758.700 303.800 765.500 311.800 763 321" fill="none" stroke="url(#lm)" stroke-width="3.400"/>
<path d="M729.300 321L736 317.500H740V338H737.500L733 333.500Z" fill="url(#lm)" stroke="#47ccf7" stroke-width="1.200"/>
<path d="M765.700 321L759 317.500H755V338H757.500L762 333.500Z" fill="url(#lm)" stroke="#47ccf7" stroke-width="1.200"/>
<rect x="739.600" y="317" width="6.700" height="23" rx="2.400" fill="url(#lm2)" stroke="#47ccf7" stroke-width="1.300"/>
<rect x="748.700" y="317" width="6.700" height="23" rx="2.400" fill="url(#lm2)" stroke="#47ccf7" stroke-width="1.300"/>
<!-- Videos : camcorder -->
<rect x="729.600" y="365.400" width="13" height="31" rx="2" fill="url(#lm2)" stroke="#45cdf8" stroke-width="1.500"/>
<rect x="745.300" y="365.400" width="20.200" height="15.800" rx="2" fill="url(#lm2)" stroke="#45cdf8" stroke-width="1.500"/>
<rect x="742.600" y="370" width="3" height="6" fill="#7fd9fa"/>
<circle cx="735.900" cy="372.300" r="3" fill="#d6f1fd" stroke="#45cdf8" stroke-width="1.100"/>
<rect x="733" y="366.200" width="6" height="1" fill="#e6f7fe"/>
<!-- Desktop -->
<path d="M983.300 189.500C983.300 187.500 985 186.800 987 186.600 996 185.600 1007 185.600 1016 186.600 1018 186.800 1019.700 187.500 1019.700 189.500V212C1019.700 214 1018 214.700 1016 214.900 1007 215.900 996 215.900 987 214.900 985 214.700 983.300 214 983.300 212Z" fill="#b9e7fc" stroke="#45cdf8" stroke-width="1.400"/>
<rect x="986.300" y="190.700" width="30.400" height="20.600" fill="#fff" stroke="#45cdf8" stroke-width="1.500"/>
<path d="M983.800 187.500L986.300 190.700M1019.200 187.500L1016.700 190.700M983.800 214.200L986.300 211.300M1019.200 214.200L1016.700 211.300" stroke="#45cdf8" stroke-width="1"/>
<g fill="#5fd2f8">
<rect x="988.900" y="192.400" width="7.800" height="4.800" rx=".8"/><rect x="997.900" y="192.400" width="7.300" height="4.800" rx=".8"/><rect x="1006.400" y="192.400" width="7.500" height="4.800" rx=".8"/>
<rect x="988.900" y="198.200" width="7.800" height="4.800" rx=".8"/><rect x="997.900" y="198.200" width="7.300" height="4.800" rx=".8"/><rect x="1006.400" y="198.200" width="7.500" height="4.800" rx=".8"/>
<rect x="988.900" y="204" width="7.800" height="4.900" rx=".8"/><rect x="997.900" y="204" width="7.300" height="4.900" rx=".8"/><rect x="1006.400" y="204" width="7.500" height="4.900" rx=".8"/>
</g>
<g stroke="#d4f0fd" stroke-width="1"><path d="M990.500 194.800H995M999.500 194.800H1003.500M1008 194.800H1012.500M990.500 200.600H995M999.500 200.600H1003.500M1008 200.600H1012.500M990.500 206.500H995M999.500 206.500H1003.500M1008 206.500H1012.500"/></g>
<!-- Downloads -->
<path d="M994.200 246.500H1008.400V262H1019.800L1001.600 274.200 983.200 262H994.200Z" fill="url(#lm)" stroke="#47ccf7" stroke-width="1.200" stroke-linejoin="round"/>
<rect x="993.800" y="241.400" width="15" height="5.300" rx=".8" fill="#58d0f8"/>
<path d="M995.500 244H1007" stroke="#d4f0fd" stroke-width="1.200" stroke-dasharray="1.300 1"/>
<rect x="982.500" y="275.100" width="38" height="4.600" rx="1.800" fill="#c9ecfd" stroke="#45cdf8" stroke-width="1.300"/>
<!-- Pictures : camera -->
<path d="M989.700 312.500L991.300 311V307.400H998.200V310.300L999.500 311.300H1002V306.100H1014.800V311.300H1025V334.800H989.700Z" fill="url(#lm)" stroke="#47ccf7" stroke-width="1.100"/>
<path d="M989.500 334.200C1000 335.600 1014 335.600 1025 334.200" stroke="#47ccf7" stroke-width="1.800" fill="none"/>
<circle cx="1008.300" cy="322" r="9.600" fill="#4ecef8"/>
<circle cx="1008.300" cy="322" r="8.200" fill="url(#lm)" stroke="#f4fbff" stroke-width="1.300"/>
<rect x="992.500" y="308.300" width="3" height="1" fill="#e6f7fe"/>
<!-- Local Disk : HDD -->
<circle cx="747.500" cy="461.200" r="13.200" fill="url(#lm)" stroke="#4bcdf8" stroke-width="1.300"/>
<circle cx="747.500" cy="461.200" r="2.700" fill="#45cdf8"/>
<path d="M747.500 456.800V465.600M743.100 461.200H751.900M744.400 458.100L750.600 464.300M750.600 458.100L744.400 464.300" stroke="#45cdf8" stroke-width=".9"/>
<path d="M734.8 473.8L740.3 470.9L749.4 479.4L748.0 485.4L736.4 485.4L734.4 482.2Z" fill="url(#lm)" stroke="#45cdf8" stroke-width="1.200" stroke-linejoin="round"/>
<path d="M748.0 482.2L760.0 482.2L760.0 485.7L748.0 485.7Z" fill="url(#lm)"/>
<path d="M751.5 476.9L759.6 476.9L759.6 482.2L751.5 482.2Z" fill="#f4fbff" stroke="#45cdf8" stroke-width="1.900"/>
<path d="M740.500 477.500L755.500 466.300" stroke="#45cdf8" stroke-width="2.600"/><path d="M741 477L755 466.700" stroke="#d4f0fd" stroke-width=".9"/>
<path d="M739 473L743 479M737.500 476L741.500 482M744.500 481L741 486" stroke="#d4f0fd" stroke-width="1"/>
<g fill="#45cdf8"><circle cx="735.200" cy="449.400" r="2.100"/><circle cx="759.800" cy="449.400" r="2.100"/><circle cx="735" cy="469.600" r="2"/><circle cx="760" cy="469.600" r="2"/><circle cx="735.200" cy="486" r="2.200"/><circle cx="759.800" cy="486" r="2.200"/><circle cx="747.500" cy="486.500" r="1.500"/><circle cx="760" cy="477.500" r="1.500"/></g>
<path d="M735.500 450L741 455M736.500 448.500L743 452.500" stroke="#45cdf8" stroke-width="1.500"/>
<!-- CD Drive -->
<circle cx="1001.500" cy="467.800" r="18.200" fill="url(#lm)" stroke="#45cdf8" stroke-width="1.600"/>
<path d="M984.720 459.790A18.600 18.600 0 0 1 1005.050 449.540L1002.930 460.440A7.500 7.500 0 0 0 994.730 464.570Z" fill="#47ccf7"/>
<path d="M986.900 460L994.200 463.600A8.300 8.300 0 0 1 1002.500 459.700L1004 451.500A16.700 16.700 0 0 0 986.900 460Z" fill="#fff"/>
<path d="M1018.100 477.400A19.200 19.200 0 0 1 1005.400 486.400L1003 475.200A7.700 7.700 0 0 0 1008.100 471.500Z" fill="#47ccf7"/>
<path d="M1015.800 477A16.600 16.600 0 0 1 1006.300 484L1004.500 475.800A8.300 8.300 0 0 0 1008.800 473Z" fill="#fff"/>
<circle cx="1001.500" cy="467.800" r="5.400" fill="#fff" stroke="#45cdf8" stroke-width="2.600"/>
</svg>
<!--CI_END-->
<!-- details pane -->
<div class="abs" style="left:511px;top:518px;width:705px;height:59px;background:#f1f3fa;border-top:1px solid #d6dbe9"></div>
<span class="t" style="left:594px;top:526px;font-size:13px;line-height:16px;height:16px;color:#000;letter-spacing:-0.764px;">DESKTOP-3LNT43I</span>
<span class="t" style="left:704.6px;top:527px;font-size:12px;line-height:15px;height:15px;color:#6d6d6d;letter-spacing:0.021px;">Workgroup:</span>
<span class="t" style="left:713.4px;top:545px;font-size:12px;line-height:15px;height:15px;color:#6d6d6d;letter-spacing:-0.451px;">Processor:</span>
<span class="t" style="left:778px;top:527px;font-size:12px;line-height:15px;height:15px;color:#1e2050;letter-spacing:-1.168px;">WORKGROUP</span>
<span class="t" style="left:778px;top:545px;font-size:12px;line-height:15px;height:15px;color:#1e2050;letter-spacing:-0.188px;">Intel(R) Core(TM)2 Qu...</span>
<span class="t" style="left:905.3px;top:527px;font-size:12px;line-height:15px;height:15px;color:#6d6d6d;letter-spacing:0.055px;">Memory:</span>
<span class="t" style="left:964px;top:527px;font-size:12px;line-height:15px;height:15px;color:#1e2050;letter-spacing:-0.839px;">2.00 GB</span>
<svg style="left:525px;top:522px" width="60" height="50" viewBox="525 522 60 50">
<path d="M533 533.500H530V563.500H533" fill="none" stroke="#a6e3fb" stroke-width="1"/><path d="M579.500 532.500V535M579.500 561V564" stroke="#c3ebfc" stroke-width="1"/>
<rect x="534.700" y="531.400" width="40.400" height="25.800" rx="2" fill="#9fe0fb" stroke="#42ccf8" stroke-width="1.500"/>
<rect x="537" y="533" width="36" height="2.800" fill="#55cff8"/><path d="M538 534.400H572" stroke="#c9edfc" stroke-width="1.200" stroke-dasharray="2 1.400"/>
<path d="M535 556.800L541 551.300M575 556.800L569.200 551.300M535 532L541 537.300M575 532L569.200 537.300" stroke="#42ccf8" stroke-width="1"/>
<rect x="541" y="537.400" width="28.200" height="13.900" fill="#f1f3fa" stroke="#42ccf8" stroke-width="1.500"/>
<path d="M552.200 557.500H557.600L561.200 565.500H548.600Z" fill="#a6e0fa" stroke="#42ccf8" stroke-width="1.400" stroke-linejoin="round"/>
<path d="M550.500 562H559.500" stroke="#42ccf8" stroke-width="1.200"/>
<path d="M548 553.500L552 557M562 553.500L558 557" stroke="#42ccf8" stroke-width="1"/>
<rect x="571" y="552.500" width="2.200" height="3" fill="#d9f2fd"/>
</svg>
<!-- status bar -->
<span class="t" style="left:525.4px;top:582px;font-size:12px;line-height:15px;height:15px;color:#1e2050;letter-spacing:-0.165px;">9 items</span>
<div class="abs" style="left:573px;top:581px;width:1px;height:16px;background:#f5f5f5"></div>
<svg style="left:1171px;top:581px" width="18" height="14" viewBox="0 0 18 14"><rect x=".500" y="1" width="4" height="12" fill="#fff" stroke="#8e8e8e" stroke-width="1"/><path d="M.500 5H4.500M.500 9H4.500" stroke="#8e8e8e" stroke-width="1"/><rect x="2" y="2.500" width="1" height="1" fill="#3c7a4a"/><rect x="2" y="6.500" width="1" height="1" fill="#4a8df0"/><rect x="2" y="10.500" width="1" height="1" fill="#e02020"/><path d="M6.500 3H10.500M12.500 3H16.500M6.500 7H10.500M12.500 7H16.500M6.500 11H10.500M12.500 11H16.500" stroke="#6e6e6e" stroke-width="1"/></svg>
<svg style="left:1194px;top:582px" width="16" height="12" viewBox="0 0 16 12"><rect x="1" y="1" width="13.500" height="10" fill="#fff" stroke="#8e8e8e" stroke-width="1.100"/><rect x="3" y="3" width="9.500" height="6" fill="#5b9cf0"/><path d="M3 9V6.500C5 5 7 6 9 7L12.500 8V9Z" fill="#3c6a4a"/><rect x="3" y="8" width="9.500" height="1" fill="#2a5a9a"/></svg>

</div></div>
<div id="tb">
<!-- coordinates relative to taskbar top (728) -->
<svg style="left:15px;top:11px" width="18" height="18" viewBox="0 0 18 18"><path d="M0.700 3.100L7.300 2.100V8.300H0.700ZM8.300 1.950L17.100 0.700V8.300H8.300ZM0.700 9.300H7.300V15.500L0.700 14.500ZM8.300 9.300H17.100V16.900L8.300 15.650Z" fill="#fff"/></svg>
<svg style="left:61px;top:12px" width="22" height="16" viewBox="0 0 22 16"><rect x="5.600" y="1.300" width="10.800" height="12.800" fill="none" stroke="#fff" stroke-width="1.300"/><path d="M3.200 2.800H1.200V12.600H3.200M18.800 2.800H20.800V12.600H18.800" fill="none" stroke="#fff" stroke-width="1.200"/></svg>
<div class="abs" style="left:99px;top:0;width:48px;height:40px;background:#343434"></div>
<div class="abs" style="left:99px;top:38px;width:48px;height:2px;background:#76b9ed"></div>
<svg style="left:111px;top:10px" width="24" height="20" viewBox="0 0 24 20"><path d="M1 2.200C1 1.500 1.500 1 2.200 1H8.500L10 3H21.800C22.500 3 23 3.500 23 4.200V18H1Z" fill="#f2d272"/><path d="M1 4.500H23V18.200H1Z" fill="#fbe28f"/><rect x="2.300" y="2" width="5.500" height="1.400" fill="#fff6c8"/><path d="M5.500 19V12.500C5.500 11.700 6.100 11 7 11H17C17.900 11 18.500 11.700 18.500 12.500V19H15.500V14H8.500V19Z" fill="#2f9be0"/><path d="M1 17.600H5.500V19H1ZM18.500 17.600H23V19H18.500Z" fill="#e8b84a"/></svg>
<svg style="left:1176px;top:15px" width="14" height="10" viewBox="0 0 14 10"><path d="M1.200 8.300L7 2.300L12.800 8.300" fill="none" stroke="#fff" stroke-width="1.300"/></svg>
<svg style="left:1198px;top:13px" width="18" height="16" viewBox="0 0 18 16"><path d="M1.500 1.600H16.500V8M3.700 6V13.800M3.700 10H8M6 13.400H9" fill="none" stroke="#fff" stroke-width="1.100"/><path d="M2.800 3L3.700 4.200L4.600 3" fill="none" stroke="#fff" stroke-width=".8"/><rect x="1.500" y="1.600" width="4.400" height="4.400" fill="none" stroke="#fff" stroke-width="1"/><circle cx="12.800" cy="11" r="4.300" fill="#e81123"/><path d="M10.900 9.100L14.700 12.900M14.700 9.100L10.900 12.900" stroke="#fff" stroke-width="1.200"/></svg>
<svg style="left:1222px;top:12px" width="19" height="16" viewBox="0 0 19 16"><path d="M1.500 5.700H4.200L7.800 2.300V13.700L4.200 10.300H1.500Z" fill="none" stroke="#fff" stroke-width="1.100"/><path d="M10.200 5.500C11.300 6.700 11.300 9.300 10.200 10.500M12.600 3.600C14.800 6 14.800 10 12.600 12.400M15 1.800C18.300 5.500 18.300 10.500 15 14.200" fill="none" stroke="#fff" stroke-width="1.100"/></svg>
<span class="t" style="left:1251.6px;top:4px;font-size:12px;line-height:15px;height:15px;color:#fff;letter-spacing:-0.455px;">11:42 PM</span>
<span class="t" style="left:1246.8px;top:22px;font-size:12px;line-height:15px;height:15px;color:#fff;letter-spacing:-0.296px;">12/10/2017</span>
<svg style="left:1319px;top:11px" width="17" height="18" viewBox="0 0 17 18"><path d="M0.500 1H16V13H10.200L8.200 15.500L6.200 13H0.500Z" fill="#fff"/><path d="M3.300 4.300H13.200M3.300 6.900H13.200M3.300 9.500H10.500" stroke="#020306" stroke-width="1.100"/></svg>
<div class="abs" style="left:1355px;top:0;width:1px;height:40px;background:#4a4a4a"></div>

</div>
</body>
</html>
